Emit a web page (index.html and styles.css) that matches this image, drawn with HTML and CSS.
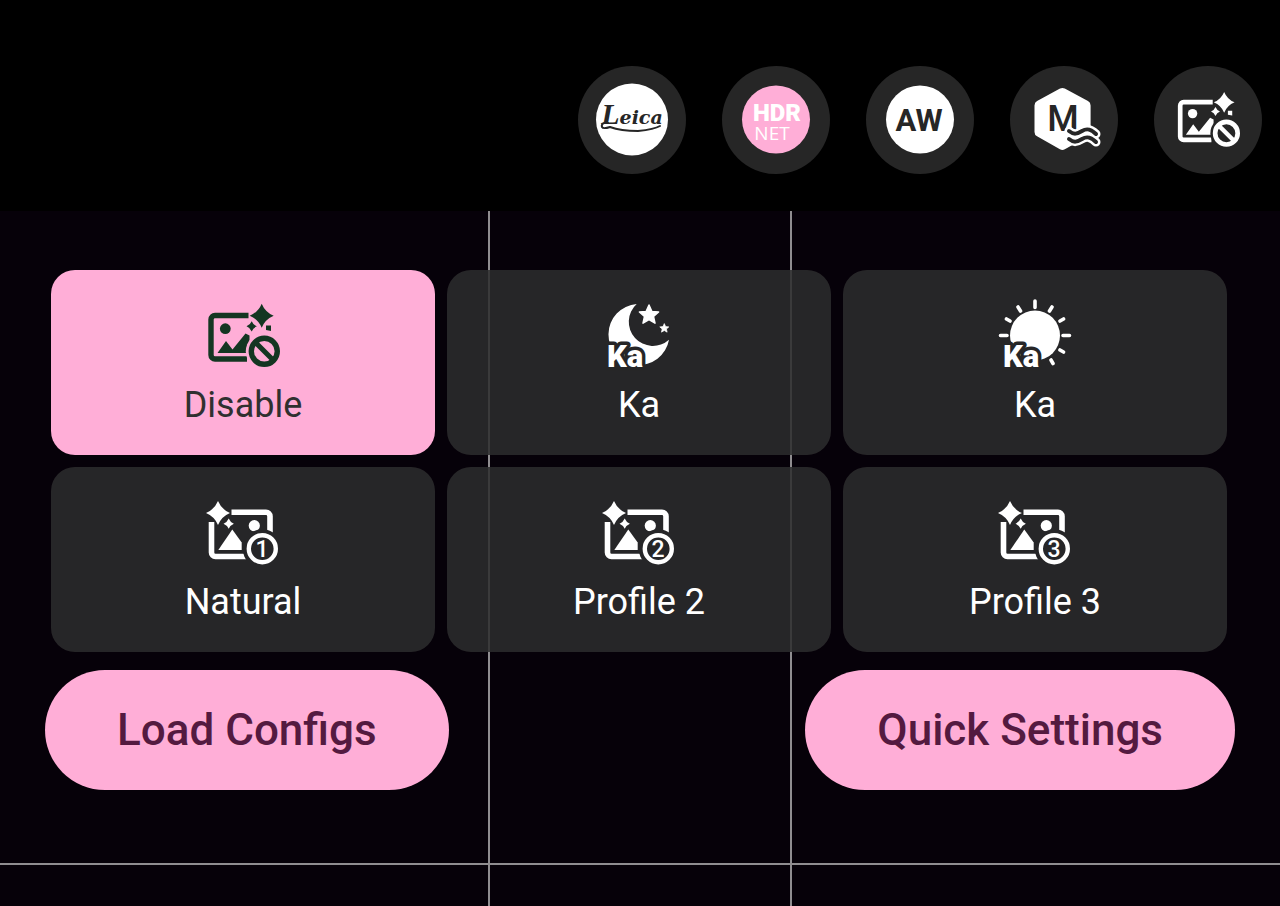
FILE: index.html
```
<!DOCTYPE html>
<html lang="en">
<head>
    <meta charset="UTF-8">
    <meta name="viewport" content="width=device-width, initial-scale=1.0">
    <title>Camera Profiles</title>
    <link rel="stylesheet" href="styles.css">
</head>
<body>

    <!-- shared icon parts -->
    <svg class="defs" width="0" height="0" aria-hidden="true">
        <defs>
            <path id="spark" d="M0-12Q3.500-3.500 12 0Q3.500 3.500 0 12Q-3.500 3.500-12 0Q-3.500-3.500 0-12Z"/>
            <path id="star" d="M0-10L2.800-3.600 9.600-3 4.500 1.500 6 8.200 0 4.700-6 8.200-4.500 1.500-9.600-3-2.800-3.600Z" stroke="currentColor" stroke-width="1.500" stroke-linejoin="round"/>

            <mask id="ban-cut">
                <rect width="76" height="72" fill="#fff"/>
                <circle cx="59.3" cy="53.3" r="18.500" fill="#000"/>
            </mask>
            <g id="photo-off">
                <g mask="url(#ban-cut)">
                    <path d="M43.500 17.500H10a4 4 0 0 0-4 4V57a4 4 0 0 0 4 4H42" fill="none" stroke="currentColor" stroke-width="5.400"/>
                    <circle cx="20.300" cy="30.700" r="5.400"/>
                    <path d="M12.500 55L21 43l6.500 8.500L40.500 35.500l4 2V55Z"/>
                </g>
                <use href="#spark" transform="translate(56.700 17.700)"/>
                <use href="#spark" transform="translate(46.700 28.300) scale(.43)"/>
                <path d="M61 27.500h5V33l-5-1Z"/>
                <circle cx="59.300" cy="53.300" r="13" fill="none" stroke="currentColor" stroke-width="5.400"/>
                <path d="M50.300 44.300l18 18" stroke="currentColor" stroke-width="5"/>
            </g>

            <mask id="num-cut">
                <rect width="76" height="72" fill="#fff"/>
                <circle cx="57.300" cy="53.700" r="19.500" fill="#000"/>
            </mask>
            <g id="photo-num">
                <g mask="url(#num-cut)">
                    <path d="M26.500 17.200H61a4 4 0 0 1 4 4V38M6.500 27V57.500a4 4 0 0 0 4 4H42" fill="none" stroke="currentColor" stroke-width="5.600"/>
                    <circle cx="49.300" cy="30.700" r="5.600"/>
                    <path d="M13.300 55L27.300 34.500 36.700 47.500V55Z"/>
                </g>
                <use href="#spark" transform="translate(13 18)"/>
                <use href="#spark" transform="translate(23.700 28.700) scale(.43)"/>
                <circle cx="57.300" cy="53.700" r="13.500" fill="none" stroke="currentColor" stroke-width="4.400"/>
            </g>
        </defs>
    </svg>

    <header class="topbar">
        <button class="round-btn" aria-label="Leica">
            <svg viewBox="0 0 108 108">
                <circle cx="54" cy="53.500" r="36"/>
                <text class="leica" x="54" y="58"><tspan class="leica-l">L</tspan>eica</text>
                <path class="ink-line" d="M30 57c-4-1-7 1-6 4 1 2 5 1 8 0 8 3 17 4 28 4 10-1 17-2 22-5"/>
            </svg>
        </button>
        <button class="round-btn" aria-label="HDR NET">
            <svg viewBox="0 0 108 108">
                <circle class="pink" cx="54" cy="53.500" r="34"/>
                <text class="hdr" x="55" y="55">HDR</text>
                <text class="net" x="50" y="74">NET</text>
            </svg>
        </button>
        <button class="round-btn" aria-label="Auto white balance">
            <svg viewBox="0 0 108 108">
                <circle cx="54" cy="53.500" r="34"/>
                <text class="aw" x="53" y="65">AW</text>
            </svg>
        </button>
        <button class="round-btn" aria-label="Motion mode">
            <svg viewBox="0 0 108 108">
                <path d="M52.400 27L75.600 39.500V66L52.400 79 29.500 66V39.500Z" stroke="currentColor" stroke-width="10" stroke-linejoin="round"/>
                <text class="motion" x="53" y="65">M</text>
                <g fill="none" stroke-linecap="round">
                    <path d="M59 65c5 4 8 3 13 0s9-2 14 3M59 73c5 4 8 3 13 0s9-2 14 3" stroke="currentColor" stroke-width="9"/>
                    <path d="M59 65c5 4 8 3 13 0s9-2 14 3M59 73c5 4 8 3 13 0s9-2 14 3" class="wave"/>
                </g>
            </svg>
        </button>
        <button class="round-btn" aria-label="Profile disabled">
            <svg viewBox="0 0 108 108">
                <use href="#photo-off" transform="translate(21 21) scale(.867)"/>
            </svg>
        </button>
    </header>

    <main class="viewfinder">
        <div class="guide guide-v1"></div>
        <div class="guide guide-v2"></div>
        <div class="guide guide-h"></div>

        <div class="profiles">
            <button class="tile active">
                <svg viewBox="0 0 76 72" aria-hidden="true"><use href="#photo-off"/></svg>
                <span>Disable</span>
            </button>
            <button class="tile">
                <svg viewBox="0 0 76 72" aria-hidden="true">
                    <path d="M35.700 6A30.500 30.500 0 1 0 68 41.700 24 24 0 0 1 35.700 6Z"/>
                    <use href="#star" transform="translate(48 17)"/>
                    <use href="#star" transform="translate(63.300 30.300) scale(.47)"/>
                    <text class="ka" x="6" y="69">Ka</text>
                </svg>
                <span>Ka</span>
            </button>
            <button class="tile">
                <svg viewBox="0 0 76 72" aria-hidden="true">
                    <circle cx="38" cy="37.500" r="25"/>
                    <g transform="translate(38 37.500)" stroke="currentColor" stroke-width="3.600" stroke-linecap="round">
                        <path d="M0-34.500V-28M-34.500 0H-28M34.500 0H28"/>
                        <path d="M-28.500-16.500L-25-14.500M-17-28.500L-14.500-24.500M17-28.500L14.500-24.500M28.500-16.500L25-14.500M28.500 16.500L25 14.500M18 28L16 24.500"/>
                    </g>
                    <text class="ka" x="6" y="69">Ka</text>
                </svg>
                <span>Ka</span>
            </button>
            <button class="tile">
                <svg viewBox="0 0 76 72" aria-hidden="true">
                    <use href="#photo-num"/>
                    <text class="num" x="57" y="62">1</text>
                </svg>
                <span>Natural</span>
            </button>
            <button class="tile">
                <svg viewBox="0 0 76 72" aria-hidden="true">
                    <use href="#photo-num"/>
                    <text class="num" x="57" y="62">2</text>
                </svg>
                <span>Profile 2</span>
            </button>
            <button class="tile">
                <svg viewBox="0 0 76 72" aria-hidden="true">
                    <use href="#photo-num"/>
                    <text class="num" x="57" y="62">3</text>
                </svg>
                <span>Profile 3</span>
            </button>
        </div>

        <div class="actions">
            <button class="pill">Load Configs</button>
            <button class="pill">Quick Settings</button>
        </div>
    </main>

</body>
</html>
```
FILE: styles.css
```
* {
    box-sizing: border-box;
}
body {
    margin: 0;
    min-height: 100vh;
    display: flex;
    flex-direction: column;
    background-color: #000;
    color: #fff;
    font-family: Roboto, "Open Sans", sans-serif;
}
button {
    border: none;
    padding: 0;
    color: inherit;
    font-family: inherit;
    cursor: pointer;
}
svg {
    display: block;
    fill: currentColor;
    overflow: visible;
}
.defs {
    position: absolute;
}

/* top bar */
.topbar {
    display: flex;
    justify-content: flex-end;
    gap: 36px;
    padding: 66px 18px 37px;
}
.round-btn {
    width: 108px;
    height: 108px;
    border-radius: 50%;
    background-color: #262626;
}
.round-btn text {
    fill: #262626;
    text-anchor: middle;
}
.round-btn .pink {
    fill: #ffaed7;
}
.round-btn .leica {
    font: italic bold 19px "DejaVu Serif", "Liberation Serif", serif;
}
.leica-l {
    font: italic bold 30px "Liberation Serif", serif;
}
.ink-line {
    fill: none;
    stroke: #262626;
    stroke-width: 2;
    stroke-linecap: round;
}
.round-btn .hdr {
    fill: #fff;
    font-size: 24px;
    font-weight: 900;
}
.round-btn .net {
    fill: #fff;
    font: 400 19px "Open Sans", sans-serif;
}
.round-btn .aw {
    font-size: 31px;
    font-weight: 700;
}
.round-btn .motion {
    font-size: 36px;
    font-weight: 500;
}
.wave {
    stroke: #262626;
    stroke-width: 4;
}

/* viewfinder */
.viewfinder {
    position: relative;
    flex: 1;
    padding: 59px 45px 115px;
    background-color: #060109;
}
.guide {
    position: absolute;
    background-color: #8f8d90;
}
.guide-v1, .guide-v2 {
    top: 0;
    bottom: 0;
    width: 2px;
}
.guide-v1 {
    left: 38.150%;
}
.guide-v2 {
    right: 38.150%;
}
.guide-h {
    left: 0;
    right: 0;
    bottom: 41px;
    height: 2px;
}
.profiles {
    position: relative;
    display: grid;
    grid-template-columns: repeat(3, 1fr);
    gap: 12px;
    padding: 0 8px 0 6px;
}
.tile {
    display: flex;
    flex-direction: column;
    align-items: center;
    gap: 13px;
    padding: 28px 12px;
    border-radius: 24px;
    background-color: rgba(44, 44, 45, 0.86);
    font-size: 36px;
    line-height: 44px;
}
.tile svg {
    width: 76px;
    height: 72px;
}
.tile.active {
    background-color: #ffaed7;
    color: #303030;
}
.tile.active svg {
    color: #143622;
}
.ka {
    font-size: 31px;
    font-weight: 900;
    stroke: #262627;
    stroke-width: 7px;
    stroke-linejoin: round;
    paint-order: stroke;
}
.num {
    font-size: 23px;
    font-weight: 500;
    text-anchor: middle;
}
.actions {
    position: relative;
    display: flex;
    justify-content: space-between;
    margin-top: 18px;
}
.pill {
    height: 120px;
    padding: 0 72px;
    border-radius: 60px;
    background-color: #ffaed7;
    color: #541a40;
    font-size: 44px;
    font-weight: 500;
}
```
